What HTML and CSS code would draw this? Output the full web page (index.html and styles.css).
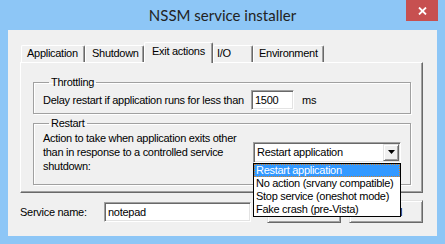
FILE: index.html
```html
<!DOCTYPE html>
<html lang="en">
<head>
    <meta charset="UTF-8">
    <title>NSSM service installer</title>
    <link rel="stylesheet" href="styles.css">
</head>
<body>

<div class="window">
    <div class="titlebar">
        <span class="title">NSSM service installer</span>
        <span class="close">
            <svg width="9" height="8" viewBox="0 0 9 8"><path d="M1 0.5 L8 7.5 M8 0.5 L1 7.5" stroke="#fff" stroke-width="1.8"/></svg>
        </span>
    </div>

    <div class="client">
        <!-- Tab strip -->
        <div class="tabs">
            <div class="tab tab-app">Application</div>
            <div class="tab tab-shutdown">Shutdown</div>
            <div class="tab tab-exit selected">Exit actions</div>
            <div class="tab tab-io">I/O</div>
            <div class="tab tab-env">Environment</div>
        </div>

        <div class="panel">
            <fieldset class="group throttling">
                <legend>Throttling</legend>
                <div class="row">
                    <span class="delay-label">Delay restart if application runs for less than</span>
                    <div class="edit num">1500</div>
                    <span class="unit">ms</span>
                </div>
            </fieldset>

            <fieldset class="group restart">
                <legend>Restart</legend>
                <div class="row">
                    <p class="desc">Action to take when application exits other<br>than in response to a controlled service<br>shutdown:</p>
                    <div class="combo">
                        <div class="combo-box">
                            <span class="combo-text">Restart application</span>
                            <span class="combo-btn">
                                <svg width="7" height="4" viewBox="0 0 7 4"><polygon points="0,0 7,0 3.5,4" fill="#000"/></svg>
                            </span>
                        </div>
                        <!-- Open dropdown list -->
                        <ul class="dropdown">
                            <li class="active">Restart application</li>
                            <li>No action (srvany compatible)</li>
                            <li>Stop service (oneshot mode)</li>
                            <li>Fake crash (pre-Vista)</li>
                        </ul>
                    </div>
                </div>
            </fieldset>
        </div>

        <div class="footer">
            <label class="name-label">Service name:</label>
            <div class="edit name">notepad</div>
            <button class="btn install">Install service</button>
            <button class="btn cancel">Cancel</button>
        </div>
    </div>
</div>

</body>
</html>
```

FILE: styles.css
```css
* {
    box-sizing: border-box;
}

body {
    margin: 0;
    background-color: #8dc6f6;
    font-family: "Liberation Sans", Arial, sans-serif;
    font-size: 11px;
    letter-spacing: -0.28px;
    color: #000;
}

.window {
    width: 445px;
    height: 244px;
    padding: 0 8px 8px;
    display: flex;
    flex-direction: column;
}

.titlebar {
    height: 30px;
    position: relative;
    display: flex;
    justify-content: center;
    align-items: center;
}

.title {
    font-family: Lato, "Liberation Sans", sans-serif;
    font-size: 15px;
    letter-spacing: 0;
    color: #222;
}

.close {
    position: absolute;
    top: 0;
    right: -1px;
    width: 32px;
    height: 21px;
    background-color: #c75050;
    display: flex;
    justify-content: center;
    align-items: center;
}

.client {
    flex: 1;
    background-color: #f0f0f0;
    padding: 12px 14px 0 12px;
    display: flex;
    flex-direction: column;
}

/* Tabs */
.tabs {
    display: flex;
    align-items: flex-end;
    height: 20px;
    padding-left: 1px;
    position: relative;
    z-index: 1;
}

.tab {
    height: 17px;
    border-top: 1px solid #fff;
    border-left: 1px solid #fff;
    border-right: 1px solid #696969;
    border-radius: 2px 2px 0 0;
    box-shadow: inset -1px 0 0 #a0a0a0;
    padding-left: 5px;
    line-height: 14px;
    white-space: nowrap;
}

.tab.selected {
    height: 21px;
    margin-bottom: -1px;
    background-color: #f0f0f0;
    padding-top: 1px;
    padding-left: 7px;
}

.tab-app { width: 64px; }
.tab-shutdown { width: 59px; padding-left: 6px; }
.tab-exit { width: 69px; }
.tab-io { width: 40px; padding-left: 3px; }
.tab-env { width: 71px; }

.panel {
    height: 131px;
    border-top: 1px solid #fff;
    border-left: 1px solid #fff;
    border-right: 1px solid #696969;
    border-bottom: 1px solid #696969;
    box-shadow: inset -1px -1px 0 #a0a0a0;
    padding: 13px 11px 0 12px;
}

/* Group boxes */
.group {
    margin: 0;
    min-width: 0;
    border: 1px solid #a0a0a0;
    box-shadow: 1px 1px 0 #fff, inset 1px 1px 0 #fff;
    padding: 1px 8px 3px 9px;
}

.group legend {
    margin-left: 6px;
    padding: 0 2px;
    line-height: 13px;
}

.restart {
    margin-top: 3px;
    padding-bottom: 11px;
}

.row {
    display: flex;
    align-items: center;
}

.delay-label {
    width: 208px;
}

.unit {
    margin-left: 8px;
}

.desc {
    width: 210px;
    margin: 0;
    line-height: 14px;
}

/* Sunken edit fields */
.edit {
    height: 20px;
    background-color: #fff;
    border-top: 1px solid #a0a0a0;
    border-left: 1px solid #a0a0a0;
    border-right: 1px solid #fff;
    border-bottom: 1px solid #fff;
    box-shadow: inset 1px 1px 0 #696969, inset -1px -1px 0 #e3e3e3;
    padding: 2px 2px 0 3px;
    line-height: 14px;
}

.num {
    width: 43px;
}

/* Combo box */
.combo {
    position: relative;
    width: 148px;
    height: 21px;
}

.combo-box {
    height: 21px;
    background-color: #fff;
    border-top: 1px solid #a0a0a0;
    border-left: 1px solid #a0a0a0;
    border-right: 1px solid #fff;
    border-bottom: 1px solid #fff;
    box-shadow: inset 1px 1px 0 #696969, inset -1px -1px 0 #e3e3e3;
    padding: 1px 1px 1px 2px;
    display: flex;
    align-items: center;
}

.combo-text {
    flex: 1;
    padding-left: 1px;
}

.combo-btn {
    width: 16px;
    height: 17px;
    background-color: #f0f0f0;
    border: 1px solid;
    border-color: #e3e3e3 #696969 #696969 #e3e3e3;
    box-shadow: inset 1px 1px 0 #fff, inset -1px -1px 0 #a0a0a0;
    display: flex;
    justify-content: center;
    align-items: center;
}

.dropdown {
    position: absolute;
    left: 0;
    top: 21px;
    width: 148px;
    margin: 0;
    padding: 0;
    list-style: none;
    background-color: #fff;
    border: 1px solid #000;
    z-index: 2;
}

.dropdown li {
    height: 13px;
    line-height: 13px;
    padding-left: 2px;
    white-space: nowrap;
}

.dropdown li.active {
    background-color: #3399ff;
    color: #fff;
    outline: 1px dotted #d0802a;
    outline-offset: -1px;
}

/* Bottom row */
.footer {
    display: flex;
    align-items: center;
    margin-top: 7px;
}

.name-label {
    width: 84px;
}

.name {
    width: 147px;
}

.btn {
    width: 74px;
    height: 23px;
    padding: 0;
    background-color: #f0f0f0;
    border: 1px solid;
    border-color: #e3e3e3 #696969 #696969 #e3e3e3;
    box-shadow: inset 1px 1px 0 #fff, inset -1px -1px 0 #a0a0a0;
    font: inherit;
    letter-spacing: inherit;
    color: #000;
}

.install {
    margin-left: 16px;
}

.cancel {
    margin-left: 8px;
}
```
